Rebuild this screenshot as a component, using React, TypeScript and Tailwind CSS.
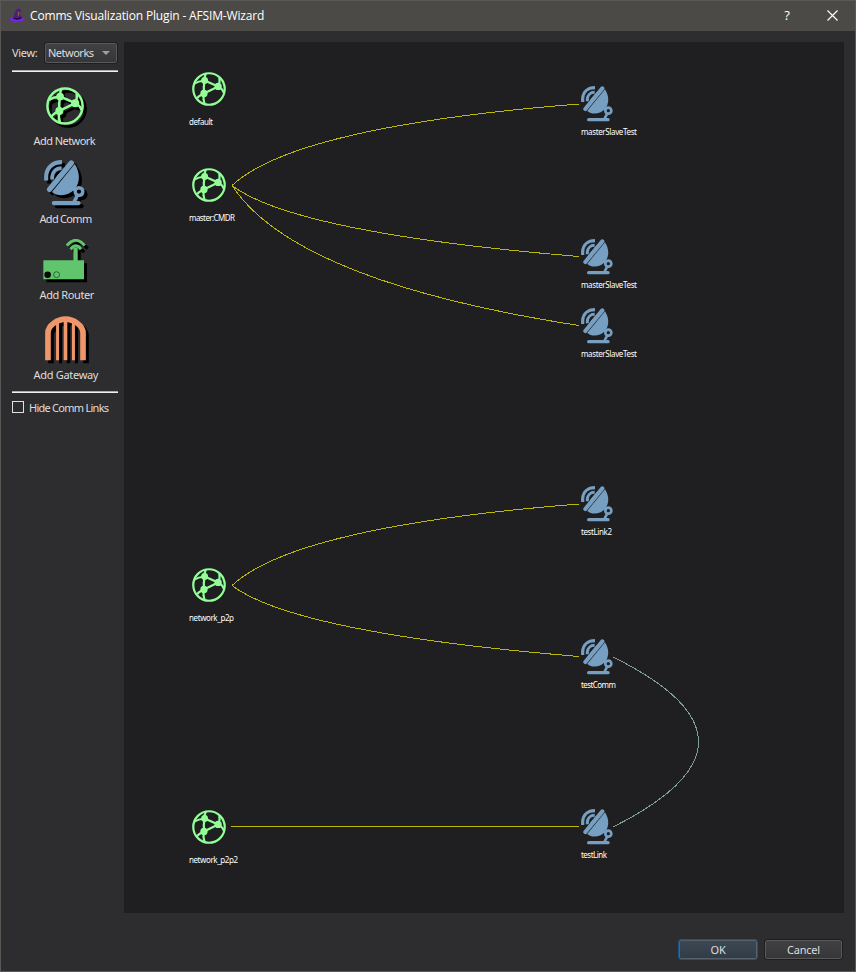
import type { ReactNode } from 'react';

const GREEN = '#92ff96';
const BLUE = '#779fc1';

function NetworkIcon({ className }: { className: string }) {
  return (
    <svg viewBox="0 0 108 108" className={className} fill="none" stroke={GREEN} strokeWidth="7">
      <circle cx="54" cy="54" r="50" strokeWidth="7" />
      <path d="M7 37Q20 29 40 27M40 27Q39 15 44 5M40 27L83 46M83 46L38 68M40 27Q36 48 38 68M83 46Q90 31 87 18M83 46Q98 54 101 66M38 68Q20 76 14 86M38 68Q34 86 40 102" />
      <g fill={GREEN} stroke="none">
        <circle cx="40" cy="27" r="11" />
        <circle cx="83" cy="46" r="11.5" />
        <circle cx="38" cy="68" r="11.5" />
      </g>
    </svg>
  );
}

function DishIcon({ className }: { className: string }) {
  return (
    <svg viewBox="0 0 96 108" className={className} fill="none" stroke={BLUE}>
      <path d="M5 48V38C6 18 20 5 42 5" strokeWidth="9.5" />
      <path d="M19 46V39C20 28 28 19 41 19" strokeWidth="9" />
      <path d="M32 41L46 25L50 22L30 45Z" fill={BLUE} strokeWidth="7" />
      <path d="M13 69L64 7" strokeWidth="12.500" strokeLinecap="round" />
      <path d="M72 9.500C84 28 86 52 72 68C57 85 33 87 18.500 75Z" fill={BLUE} stroke="none" />
      <path d="M66 66L76 72M79 82L70 99" strokeWidth="8" />
      <circle cx="82" cy="74" r="9" strokeWidth="8" />
      <path d="M23 101H81" strokeWidth="10" strokeLinecap="round" />
    </svg>
  );
}

function RouterIcon({ className }: { className: string }) {
  return (
    <svg viewBox="0 0 128 124" className={className} fill="none">
      <path d="M0 64H91V26H104V64H123V122H0Z" fill="#60c56c" />
      <path d="M71 20Q98 -12 125 20M82 31Q98 10 114 31" stroke="#60c56c" strokeWidth="9" />
      <circle cx="13" cy="108" r="10" fill="#050805" />
      <circle cx="40" cy="108" r="9" stroke="#2e6236" strokeWidth="3" />
    </svg>
  );
}

function GatewayIcon({ className }: { className: string }) {
  return (
    <svg viewBox="0 0 124 135" className={className} fill="none" stroke="#f0966b">
      <path d="M9 133V50C9 28 38 9 62 9C86 9 115 28 115 50V133" strokeWidth="17" />
      <path d="M38 14V133M86 14V133" strokeWidth="9" />
      <path d="M62 10V133" strokeWidth="11" />
    </svg>
  );
}

function WizardHat() {
  return (
    <svg viewBox="0 0 48 48" className="h-4 w-4">
      <ellipse cx="24" cy="34" rx="22" ry="8" fill="#7a1ff0" />
      <path d="M12 30C16 20 17 6 26 2C33 0 38 6 36 11L31 10L38 29Q25 36 12 30Z" fill="#4b2180" />
      <path d="M13 30Q25 37 38 28" stroke="#1d0b38" strokeWidth="4" fill="none" />
      <path d="M27 12L30 17L27 23" stroke="#a87a35" strokeWidth="3" fill="none" />
    </svg>
  );
}

function Tool({ icon, label, className }: { icon: ReactNode; label: ReactNode; className: string }) {
  return (
    <div className={`flex flex-col items-start ${className}`}>
      <div className="[filter:drop-shadow(3px_3px_0.5px_#000)]">{icon}</div>
      <span className="leading-4">{label}</span>
    </div>
  );
}

const nodes = [
  { kind: 'net', x: 189, y: 72, label: 'default', w: 24 },
  { kind: 'net', x: 189, y: 168, label: 'master:CMDR', w: 46 },
  { kind: 'net', x: 189, y: 568, label: 'network_p2p', w: 45 },
  { kind: 'net', x: 189, y: 810, label: 'network_p2p2', w: 49 },
  { kind: 'comm', x: 581, y: 86, label: 'masterSlaveTest', w: 56 },
  { kind: 'comm', x: 581, y: 239, label: 'masterSlaveTest', w: 56 },
  { kind: 'comm', x: 581, y: 308, label: 'masterSlaveTest', w: 56 },
  { kind: 'comm', x: 581, y: 486, label: 'testLink2', w: 31 },
  { kind: 'comm', x: 581, y: 639, label: 'testComm', w: 35 },
  { kind: 'comm', x: 581, y: 809, label: 'testLink', w: 26 },
];

const links = [
  'M232 185.5Q295 126.5 579 104',
  'M232 185.5Q295 233 579 256.5',
  'M232 185.5Q295 281.5 579 325.5',
  'M232 585.5Q295 526.5 579 504',
  'M232 585.5Q295 633 579 656.5',
  'M231 826.5H579',
];

export default function App() {
  return (
    <div className="flex h-[972px] w-[856px] flex-col border border-[#5a5955] bg-[#2d2d2f] font-['Noto_Sans',sans-serif] text-[11px] text-[#dededf]">
      <header className="flex h-[30px] shrink-0 items-center bg-[#4b4a47] pl-2 text-white">
        <WizardHat />
        <span className="ml-[5px] font-['Open_Sans',sans-serif] text-[12px] tracking-[-0.16px]">Comms Visualization Plugin - AFSIM-Wizard</span>
        <span className="ml-auto w-[14px] text-center font-['Open_Sans',sans-serif] text-[13px]">?</span>
        <svg viewBox="0 0 11 11" className="mb-px ml-[33px] mr-[17px] h-[11px] w-[11px]" stroke="#fff" strokeWidth="1.2">
          <path d="M.5 .5L10.5 10.5M10.5 .5L.5 10.5" />
        </svg>
      </header>

      <div className="flex h-[882px] shrink-0 pt-[11px]">
        <aside className="flex w-[123px] flex-col pl-[11px]">
          <div className="flex h-[22px] items-center">
            <span className="w-[33px] shrink-0 pt-px tracking-[-0.3px]">View:</span>
            <div className="flex h-[20px] w-[72px] items-center justify-between rounded-[2px] border border-[#59595b] bg-gradient-to-b from-[#414143] to-[#363638] pl-[2px] pr-[6px] outline outline-[#1e1e20]">
              <span className="pt-px tracking-[-0.5px]">Networks</span>
              <span className="h-0 w-0 border-x-4 border-t-4 border-x-transparent border-t-[#a0a0a0]" />
            </div>
          </div>
          <div className="mt-[6px] h-[2px] w-[106px] border-t border-[#aaa] bg-[#f0f0f0]" />

          <nav className="flex h-[319px] flex-col">
            <Tool className="mt-[10px] h-[74px] pl-[21.5px]" label={<span className="tracking-[-0.55px]">Add Network</span>} icon={<div className="flex h-[51px] items-start pl-[12.5px] pt-[5px]"><NetworkIcon className="h-[38px] w-[38px]" /></div>} />
            <Tool className="h-[77px] pl-[27.5px] pt-1" label={<span className="tracking-[-0.7px]">Add Comm</span>} icon={<div className="flex h-[51px] items-start pl-[4.5px]"><DishIcon className="h-[46px] w-[41px]" /></div>} />
            <Tool className="h-[80px] pl-[27.5px] pt-[3px]" label={<span className="tracking-[-0.4px]">Add Router</span>} icon={<div className="flex h-[51px] items-start pl-[3.5px] pt-[3px]"><RouterIcon className="h-[41px] w-[43px]" /></div>} />
            <Tool className="pl-[21.5px] pt-[3px]" label={<span className="tracking-[-0.3px]">Add Gateway</span>} icon={<div className="flex h-[51px] items-start pl-[11px]"><GatewayIcon className="h-[45px] w-[41px]" /></div>} />
          </nav>
          <div className="h-[2px] w-[106px] border-t border-[#aaa] bg-[#f0f0f0]" />
          <label className="mt-[7px] flex h-4 items-center gap-[5px]">
            <span className="mb-[2px] h-3 w-3 border border-[#e0e0e0]" />
            <span className="tracking-[-0.74px]">Hide Comm Links</span>
          </label>
        </aside>

        <main className="relative h-[871px] w-[720px] overflow-hidden bg-[#1f1f21]">
          <svg viewBox="124 42 720 871" className="absolute inset-0 h-full w-full" fill="none" shapeRendering="crispEdges">
            {links.map((d) => <path key={d} d={d} stroke="#bbb80b" />)}
            <path d="M613 657Q784 741.5 613 827" stroke="#80a28c" />
          </svg>
          {nodes.map((n) => (
            <div key={n.y} className="absolute flex flex-col" style={{ left: n.x - 124, top: n.y - 42 }}>
              {n.kind === 'net' ? <NetworkIcon className="mb-px ml-[3px] h-[34px] w-[34px]" /> : <DishIcon className="-ml-[0.5px] h-[36px] w-[32px]" />}
              <svg className="mt-1 h-4 w-[70px] overflow-visible">
                <text x="0" y={n.kind === 'net' ? 14 : 9} fill="#fff" fontSize="8" textLength={n.w} lengthAdjust="spacing">{n.label}</text>
              </svg>
            </div>
          ))}
        </main>
      </div>

      <footer className="flex flex-1 justify-end gap-[8px] pr-[13px] pt-[27px]">
        <button className="h-[19px] w-[78px] rounded-[2px] border border-[#54616b] bg-gradient-to-b from-[#3b4854] to-[#323c46] pt-px leading-4 tracking-[-0.3px] outline outline-[#17568d]">OK</button>
        <button className="h-[19px] w-[77px] rounded-[2px] border border-[#59595b] bg-gradient-to-b from-[#414143] to-[#363638] pt-px leading-4 tracking-[-0.2px] outline outline-[#1e1e20]">Cancel</button>
      </footer>
    </div>
  );
}
